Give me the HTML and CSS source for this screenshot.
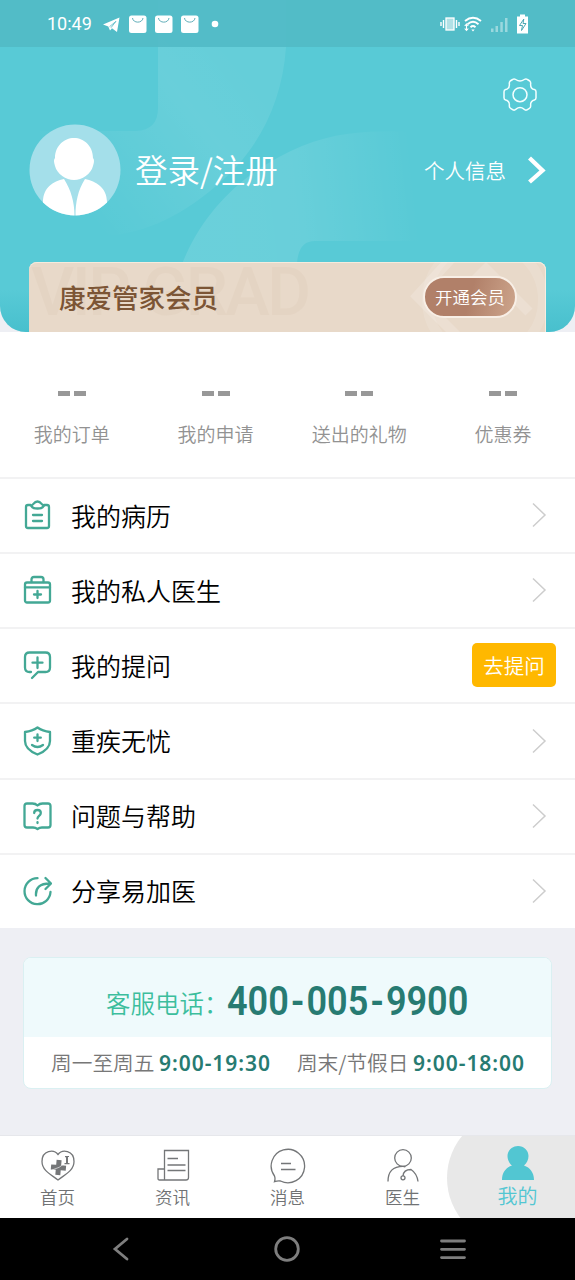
FILE: index.html
```html
<!DOCTYPE html>
<html lang="zh-CN">
<head>
<meta charset="utf-8">
<title>我的</title>
<link rel="stylesheet" href="styles.css">
</head>
<body>
<div class="screen">
  <header class="hero">
    <svg class="hero-art" viewBox="0 0 575 332" fill="none">
      <defs>
        <linearGradient id="ga" x1="75" y1="200" x2="240" y2="70" gradientUnits="userSpaceOnUse"><stop stop-color="#fff" stop-opacity="0"/><stop offset=".7" stop-color="#fff" stop-opacity=".1"/><stop offset="1" stop-color="#fff" stop-opacity=".08"/></linearGradient>
        <linearGradient id="gb" x1="230" y1="200" x2="415" y2="180" gradientUnits="userSpaceOnUse"><stop stop-color="#fff" stop-opacity=".11"/><stop offset=".35" stop-color="#fff" stop-opacity=".1"/><stop offset="1" stop-color="#fff" stop-opacity="0"/></linearGradient>
        <linearGradient id="gc" x1="0" y1="290" x2="0" y2="332" gradientUnits="userSpaceOnUse"><stop stop-color="#38b5c4" stop-opacity="0"/><stop offset="1" stop-color="#38b5c4" stop-opacity=".5"/></linearGradient>
      </defs>
      <path d="M158 0H286V47C282 105 257 152 216 186C178 219 140 235 96 237C72 237 60 232 40 220V131H136Q158 130 158 108Z" fill="url(#ga)"/>
      <path d="M182 264C207 202 254 166 302 146C345 129 382 131 425 132V241H315Q298 241 297 264Z" fill="url(#gb)"/>
      <path d="M0 290H575V332H0Z" fill="url(#gc)"/>
    </svg>
    <div class="status">
      <span class="clock">10:49</span>
      <svg class="status-left" width="118" height="20" viewBox="0 0 118 20" fill="#fff">
        <path d="M0 10.500L16.500 3.500L14 18L9 14.300L7 16.500L5.300 12.500Z"/>
        <path d="M6.500 12.700L13 7.300L8 13.700" fill="none" stroke="#53b8c4" stroke-width=".8"/>
        <g><rect x="26" y="1.500" width="17.500" height="17.500" rx="2.500"/><rect x="52" y="1.500" width="17.500" height="17.500" rx="2.500"/><rect x="78" y="1.500" width="17.500" height="17.500" rx="2.500"/></g>
        <g fill="none" stroke="#60aeb9" stroke-width="1"><path d="M29.500 4C30 9.500 39.500 9.500 40 4"/><path d="M55.500 4C56 9.500 65.500 9.500 66 4"/><path d="M81.500 4C82 9.500 91.500 9.500 92 4"/></g>
        <circle cx="112" cy="10" r="3.300"/>
      </svg>
      <svg class="status-right" width="90" height="20" viewBox="0 0 90 20" fill="none" stroke="#fff">
        <rect x="6" y="4" width="8" height="12" fill="#fff" fill-opacity=".55" stroke-width="1.300"/><path d="M1 8v4M3.500 6v8M16.500 6v8M19 8v4" stroke-width="1.400"/>
        <path d="M25 7Q33 .5 41 7M27.500 10.200Q33 5.500 38.500 10.200M30.500 13.200Q33 11 35.500 13.200" stroke-width="1.900"/><path d="M31.300 15.500h3.400L33 17.500Z" fill="#fff" stroke="none"/><path d="M26.500 9.500v7M24.700 12l1.800-2 1.800 2M24.700 14.500l1.800 2 1.800-2" stroke-width="1.100"/>
        <g fill="#fff" fill-opacity=".42" stroke="none"><path d="M51 14.500h2.500V18H51zM55.500 12H58v6h-2.500zM60.300 8h2.500v10h-2.500zM65 4h2.500v14H65z"/></g>
        <path d="M80 2h5v2h3v17h-11V4h3Z" transform="translate(0 -1.500)" fill="#fff" stroke="none"/><path d="M83.800 5L79.500 11.500h3L81.500 16.500L86 9.500h-3Z" fill="#fff" stroke="#4ba8b3" stroke-width="1"/>
      </svg>
    </div>
    <div class="settings-row">
      <svg width="36" height="36" viewBox="0 0 36 36" fill="none" stroke="#f4ffff" stroke-width="1.500" stroke-linejoin="round">
        <path d="M10.600 2.500Q12 1.300 13.700 2.500Q18 5.700 22.300 2.500Q24 1.300 25.400 2.500L27.800 4Q29 5 28.600 7.500Q28.500 11.800 32.400 12.600Q34 13 34 14.800V20.700Q34 22.600 32.400 23Q28.500 24 28.600 28Q29 30.500 27.400 31.300L25 32.800Q23.600 33.700 22 32.200Q18 29 14 32.200Q12.400 33.700 11 32.800L8.600 31.300Q7 30.500 7.400 28Q7.500 24 3.600 23Q2 22.600 2 20.700V14.800Q2 13 3.600 12.600Q7.500 11.800 7.400 7.500Q7 5 8.200 4Z"/><circle cx="18" cy="17.700" r="7"/>
      </svg>
    </div>
    <div class="profile">
      <svg width="92" height="92" viewBox="0 0 92 92">
        <defs><clipPath id="av"><circle cx="46" cy="46" r="45.500"/></clipPath></defs>
        <g clip-path="url(#av)"><rect width="92" height="92" fill="#a4dfea"/>
        <path d="M45 14C55 14 64 22 64 34Q66 36 64 42C62 50 53 56 45 56C37 56 28 50 26 42Q24 36 26 34C26 22 35 14 45 14Z" fill="#fff"/>
        <path d="M35 55C42 66 45.500 78 45.500 92H14V78C14 64 24 57 35 55ZM56 55C49 66 46.500 78 46.500 92H78V78C78 64 67 57 56 55Z" fill="#fff"/></g>
      </svg>
      <span class="login">登录/注册</span>
      <span class="info">个人信息</span>
      <svg width="20" height="30" viewBox="0 0 20 30" fill="none" stroke="#fff" stroke-width="4.300"><path d="M2.500 3L15.500 15.500L2.500 27"/></svg>
    </div>
    <div class="vip">
      <svg class="vip-art" viewBox="0 0 517 70">
        <g fill="none" stroke="#fff" stroke-opacity=".17" stroke-width="10"><path d="M430 -12L388 34L430 76"/><path d="M414 50L457 7L500 50"/><circle cx="456" cy="38" r="58" stroke-opacity=".12"/></g>
        <text x="2" y="53" class="watermark" textLength="280">VIP GRAD</text>
      </svg>
      <span class="vip-name">康爱管家会员</span>
      <span class="vip-button">开通会员</span>
    </div>
  </header>

  <section class="stats">
    <div class="stat"><i class="dash"></i><span>我的订单</span></div>
    <div class="stat"><i class="dash"></i><span>我的申请</span></div>
    <div class="stat"><i class="dash"></i><span>送出的礼物</span></div>
    <div class="stat"><i class="dash"></i><span>优惠券</span></div>
  </section>

  <nav class="menu">
    <div class="row"><svg class="icon" viewBox="0 0 30 30"><path d="M8.500 5H6Q4 5 4 7V26Q4 28 6 28H25Q27 28 27 26V7Q27 5 25 5H22"/><path d="M9 5.500C11.500 5.500 11.500 1.500 15.500 1.500C19.500 1.500 19.500 5.500 22 5.500C20 8.500 18.500 8.500 15.500 8.500S11 8.500 9 5.500ZM11 15H20M11 21H20"/></svg><span>我的病历</span><svg class="chev" viewBox="0 0 15 26"><path d="M1 1.500L13 13L1 24.500"/></svg></div>
    <div class="row"><svg class="icon" viewBox="0 0 30 30"><rect x="3" y="7.500" width="25" height="20" rx="2"/><path d="M3 12.300H28M9.500 7V4.500Q9.500 2 12 2H19Q21.500 2 21.500 4.500V7M15.500 16V23M12 19.500H19"/></svg><span>我的私人医生</span><svg class="chev" viewBox="0 0 15 26"><path d="M1 1.500L13 13L1 24.500"/></svg></div>
    <div class="row"><svg class="icon" viewBox="0 0 30 30"><path d="M9 22H7.500Q3 22 3 17.500V7Q3 2.500 7.500 2.500H23.500Q28 2.500 28 7V17.500Q28 22 23.500 22H16L10 28M15.500 7.500V18M10.500 12.700H20.500"/></svg><span>我的提问</span><span class="ask">去提问</span></div>
    <div class="row"><svg class="icon" viewBox="0 0 30 30"><path d="M15.500 1.500Q20.500 5.200 28 6V15Q28 23.500 15.500 28.500Q3 23.500 3 15V6Q10.500 5.200 15.500 1.500ZM15.500 8.500V15M12.200 11.700H18.800M10 19Q15.500 23 21 19"/></svg><span>重疾无忧</span><svg class="chev" viewBox="0 0 15 26"><path d="M1 1.500L13 13L1 24.500"/></svg></div>
    <div class="row"><svg class="icon" viewBox="0 0 30 30"><path d="M15.500 4.500Q13.500 2.500 10.500 2.500H5Q2.500 2.500 2.500 5V24Q2.500 26.500 5 26.500H11Q13.500 26.500 15.500 28Q17.500 26.500 20 26.500H26Q28.500 26.500 28.500 24V5Q28.500 2.500 26 2.500H20.500Q17.500 2.500 15.500 4.500Z"/><path d="M12.200 12C12.200 8 18.800 8 18.800 12C18.800 14.800 15.500 15 15.500 17.500M15.500 21.200V22"/></svg><span>问题与帮助</span><svg class="chev" viewBox="0 0 15 26"><path d="M1 1.500L13 13L1 24.500"/></svg></div>
    <div class="row"><svg class="icon" viewBox="0 0 30 30"><path d="M15.500 2.200A13 13 0 1 0 28.500 16"/><path d="M14 19.500C13.500 12 17.500 7.500 28 7.500M23.500 2L29 7.500L23.500 13"/></svg><span>分享易加医</span><svg class="chev" viewBox="0 0 15 26"><path d="M1 1.500L13 13L1 24.500"/></svg></div>
  </nav>

  <section class="service">
    <div class="card">
      <div class="hotline"><span class="label">客服电话：</span><span class="number">400<i>-</i>005<i>-</i>9900</span></div>
      <div class="hours"><span>周一至周五 <b>9:00-19:30</b></span><span>周末/节假日 <b>9:00-18:00</b></span></div>
    </div>
  </section>

  <nav class="tabs">
    <div class="tab"><svg viewBox="0 0 36 36"><path d="M18 6.500C22 1 34 2 34 13.500C34 23 24 27 18 32C12 27 2 23 2 13.500C2 2 14 1 18 6.500Z"/><path d="M16 12h5v5h5v5h-5v5h-5v-5h-5v-5h5z" fill="#747678" stroke="none" transform="rotate(5 18 19)"/><path d="M12 22Q20 20 25 15" stroke="#fff" stroke-width=".6"/><path d="M25 8h4v1h-1v6h1.500v1.200h-5V15H26V9.200h-1z" fill="#747678" stroke="none"/></svg><span>首页</span></div>
    <div class="tab"><svg viewBox="0 0 36 36"><path d="M9.500 32V2.500H33.500V29.500Q33.500 32 31 32H4.500Q3 32 3 30.500V21H9.500M12.500 10.500H23M12.500 17H30.500M12.500 22.500H30.500"/></svg><span>资讯</span></div>
    <div class="tab"><svg viewBox="0 0 36 36"><path d="M4.500 28A16.700 16.700 0 1 1 10.500 33Q8 32.500 4.500 33.700Q5.500 30.500 4.500 28ZM11 15.500H21M11 21.500H25.500"/></svg><span>消息</span></div>
    <div class="tab"><svg viewBox="0 0 36 36"><circle cx="18" cy="10" r="8.300"/><path d="M3 33.500Q3 18.300 18 18.300Q20 18.300 20.500 19M33 33.500Q32 25.500 26 21.500Q18.500 21.500 18 28"/><circle cx="18" cy="29.800" r="2"/></svg><span>医生</span></div>
    <div class="tab active"><svg viewBox="0 0 36 38"><path d="M18 1C24 1 28.500 5.500 28.500 11C28.500 15 26.500 18.500 24 20.500C30 22.500 34 27.500 34 35H2C2 27.500 6 22.500 12 20.500C9.500 18.500 7.500 15 7.500 11C7.500 5.500 12 1 18 1Z"/></svg><span>我的</span></div>
  </nav>
  <footer class="system">
    <svg width="26" height="26" viewBox="0 0 26 26"><path d="M18 3L6 13L18 23"/></svg>
    <svg width="26" height="26" viewBox="0 0 26 26"><circle cx="13" cy="13" r="11.300"/></svg>
    <svg width="28" height="26" viewBox="0 0 28 26"><path d="M2.500 5H25.500M2.500 13.300H25.500M2.500 21.600H25.500"/></svg>
  </footer>
</div>
</body>
</html>
```
FILE: styles.css
```css
* { box-sizing: border-box; }
body { margin: 0; font-family: "Noto Sans CJK SC", sans-serif; font-weight: 350; }
svg { display: block; flex: none; }
.screen { width: 575px; height: 1280px; overflow: hidden; background: #eeeff4; display: flex; flex-direction: column; }
.hero { position: relative; height: 332px; flex: none; background: #58cad6; border-radius: 0 0 26px 26px; overflow: hidden; display: flex; flex-direction: column; color: #fff; }
.hero-art { position: absolute; inset: 0; width: 575px; height: 332px; }
.status { position: relative; height: 47px; flex: none; background: rgba(81, 185, 197, .88); display: flex; align-items: center; padding: 0 45px 0 47px; }
.clock { font: 400 18px/20px Roboto, sans-serif; width: 56px; white-space: nowrap; }
.status-right { margin-left: auto; }
.settings-row { position: relative; height: 77px; flex: none; display: flex; justify-content: flex-end; padding: 30px 37px 0 0; }
.profile { position: relative; height: 92px; flex: none; display: flex; align-items: center; padding: 0 28px 0 29px; }
.login { font-size: 32.500px; line-height: 46px; margin: -2px 0 0 14px; }
.info { font-size: 20.500px; line-height: 30px; margin-left: auto; margin-right: 21px; }
.vip { position: relative; margin: 46px 29px 0; height: 70px; flex: none; border-radius: 8px 8px 0 0; background: #e8d9c9; box-shadow: inset 0 1px #f6ebdd, inset -1px 0 #f6ebdd; display: flex; align-items: center; padding: 0 29px 0 30px; overflow: hidden; }
.vip-art { position: absolute; inset: 0; width: 517px; height: 70px; }
.watermark { font: 500 67px Roboto, sans-serif; fill: #e4d4c3; }
.vip-name { position: relative; font-size: 26.500px; font-weight: 500; color: #7c5535; line-height: 40px; margin-top: -1px; }
.vip-button { position: relative; margin-left: auto; width: 94px; height: 42px; border: 2px solid #f8efe6; border-radius: 21px; background: linear-gradient(105deg, #b18069 50%, #cda58c); font-size: 17.500px; line-height: 38px; text-align: center; }
.stats { height: 145px; flex: none; background: #fff; display: grid; grid-template-columns: repeat(4, 1fr); padding-top: 59px; }
.stat { display: flex; flex-direction: column; align-items: center; font-size: 19px; line-height: 28px; color: #929292; }
.dash { width: 28px; height: 5px; background: linear-gradient(90deg, #989898 12px, transparent 12px 16px, #989898 16px); margin-bottom: 24px; }
.menu { flex: none; background: #fff; }
.row { height: 75.170px; border-top: 2px solid #f2f2f3; display: flex; align-items: center; padding: 0 28px 2px 22px; font-size: 25px; line-height: 36px; color: #000; }
.row > span:nth-child(2) { margin-left: 19px; flex: 1; }
.icon { width: 30px; height: 30px; margin-top: 1px; fill: none; stroke: #43a895; stroke-width: 2.300; stroke-linecap: round; stroke-linejoin: round; }
.chev { width: 15px; height: 26px; margin-top: 1px; fill: none; stroke: #cdcdcd; stroke-width: 1.500; }
.ask { width: 84px; height: 44px; border-radius: 5px; background: #ffb800; color: #fff; font-size: 20.500px; line-height: 44px; text-align: center; margin-right: -9px; }
.service { height: 207px; flex: none; padding: 29px 23px 0; }
.card { height: 132px; border: 1px solid #daf0f2; border-radius: 8px; background: #fff; overflow: hidden; }
.hotline { height: 79px; background: #effafc; color: #3cbe9d; display: flex; align-items: center; padding: 10px 0 0 82px; font-size: 24.500px; line-height: 35px; }
.label { width: 121px; white-space: nowrap; flex: none; }
.number { font: 600 41px/48px Roboto, sans-serif; color: #277b72; margin-top: -2px; transform: scaleX(.88); transform-origin: left; white-space: nowrap; }
.number i { display: inline-block; width: 20px; text-align: center; font-style: normal; }
.hours { height: 51px; display: flex; justify-content: space-between; align-items: center; padding: 0 26px 0 27px; color: #777; font-size: 20.700px; line-height: 30px; white-space: nowrap; }
.hours b { font: 600 21px "Noto Sans", sans-serif; letter-spacing: .95px; color: #277b72; }
.tabs { height: 83px; flex: none; background: #fff; border-top: 1px solid #e6e7eb; display: grid; grid-template-columns: repeat(5, 115px); overflow: hidden; }
.tab { display: flex; flex-direction: column; align-items: center; padding-top: 12px; color: #707274; font-size: 17.500px; line-height: 26px; position: relative; }
.tab svg { width: 36px; height: 36px; fill: none; stroke: #747678; stroke-width: 1.300; }
.tab.active { color: #52c6d2; font-size: 20px; padding-top: 9px; }
.tab.active::before { content: ""; position: absolute; left: -13px; top: -24px; width: 132px; height: 132px; border-radius: 66px 0 0 66px; background: #e8e8e8; }
.tab.active svg, .tab.active span { position: relative; z-index: 1; }
.tab.active svg { fill: #52c6d2; stroke: none; height: 38px; }
.system { height: 62px; flex: none; background: #000; display: flex; justify-content: space-between; align-items: center; padding: 0 108px 0 109px; }
.system svg { fill: none; stroke: #7e7e7e; stroke-width: 2.800; stroke-linecap: round; }
```
